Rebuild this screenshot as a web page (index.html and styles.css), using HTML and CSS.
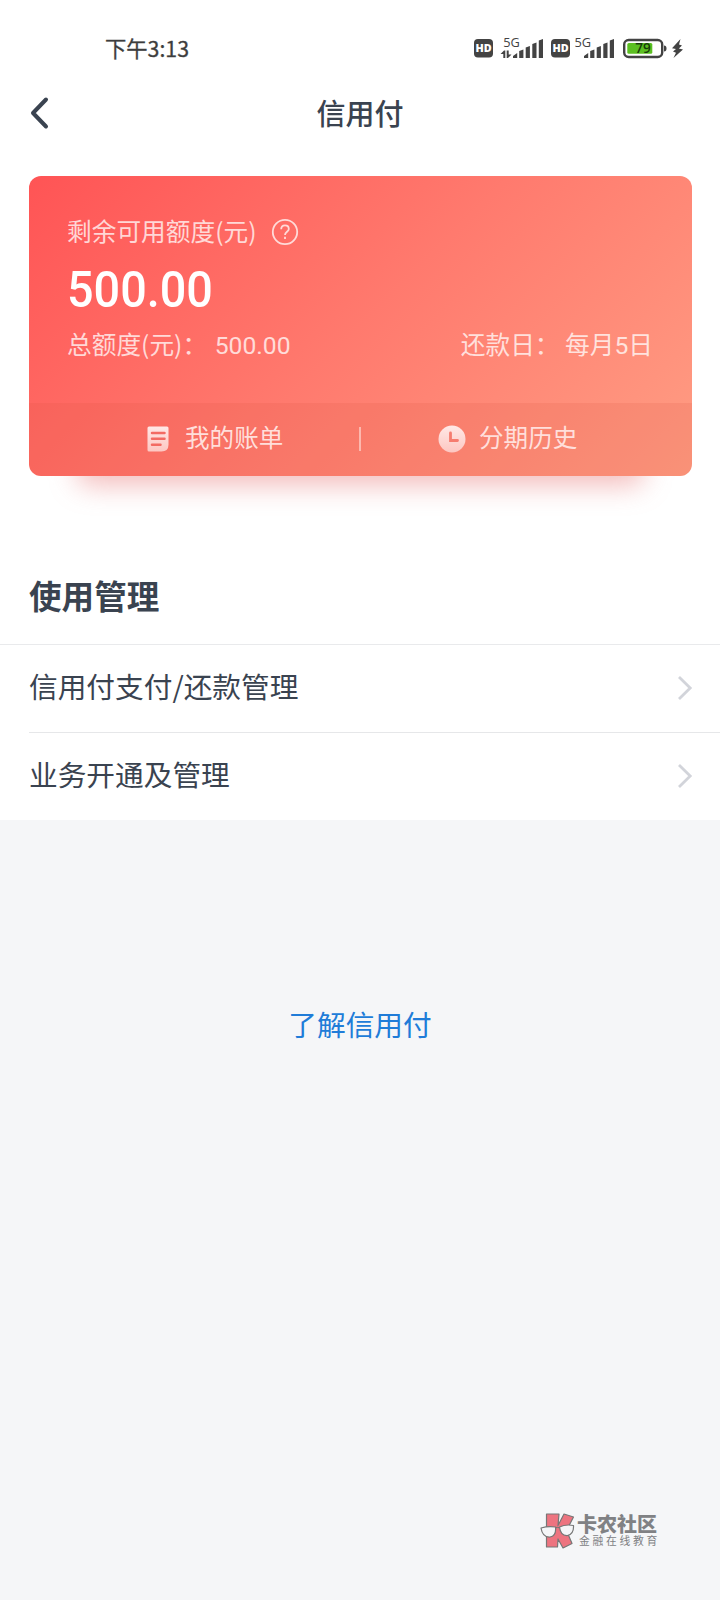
FILE: index.html
```
<!DOCTYPE html>
<html lang="zh-CN">
<head>
<meta charset="utf-8">
<title>信用付</title>
<link rel="stylesheet" href="styles.css">
</head>
<body>
<div class="page">
  <div class="panel">
    <div class="status">
      <div class="clock">下午<span class="clock-num">3:13</span></div>
      <svg class="indicators" width="212" height="36" viewBox="472 28 212 36" fill="#434343">
        <rect x="474" y="39" width="19" height="18.500" rx="4"/>
        <text class="hd" x="483.500" y="52.100">HD</text>
        <text class="net" x="503.300" y="46.500">5G</text>
        <path d="M500.500 54l3.500-3.500h1.300V58h-2v-4zM511.500 54.500L508 58h-1.300v-7.500h2v4z"/>
        <path d="M513 58v-2l4.200-3v5zM519.200 58v-7l4.200-1.600V58zM525.700 58V47.500l4.200-1.600V58zM532.300 58V44l4.200-1.600V58zM538.800 58V40.500l4.200-1.600V58z"/>
        <rect x="551" y="39" width="19" height="18.500" rx="4"/>
        <text class="hd" x="560.500" y="52.100">HD</text>
        <text class="net" x="574.500" y="46.500">5G</text>
        <path d="M584 58v-2l4.200-3v5zM590.200 58v-7l4.200-1.600V58zM596.700 58V47.500l4.200-1.600V58zM603.300 58V44l4.200-1.600V58zM609.800 58V40.500l4.200-1.600V58z"/>
        <rect x="624.200" y="40" width="38" height="17" rx="4.500" fill="#fff" stroke="#434343" stroke-width="2.400"/>
        <rect x="627.300" y="43" width="25" height="10.800" rx="1.500" fill="#5bbf21"/>
        <text class="charge" x="643" y="53.200">79</text>
        <path d="M664 45.500q2.500 0 2.500 3t-2.500 3z"/>
        <path d="M680.500 39l-8.500 9.200 4 .8-3 2.500 3 1.200-2.500 5.300 9.500-8.500-4.200-1 3.200-3-3-1z"/>
      </svg>
    </div>
    <header class="nav">
      <svg class="back" width="20" height="34" viewBox="0 0 20 34" fill="none" stroke="#3a4350" stroke-width="4" stroke-linecap="round" stroke-linejoin="round"><path d="M16 3.500L3 17l13 13.500"/></svg>
      <h1 class="title">信用付</h1>
    </header>
    <section class="card">
      <div class="card-face">
        <div class="card-main">
          <div class="label"><span>剩余可用额度(元)</span>
            <svg class="help" width="28" height="28" viewBox="0 0 28 28" fill="none" stroke="currentColor" stroke-width="1.800"><circle cx="14" cy="14" r="12.200"/><path d="M10.200 11.200c0-2.300 1.500-3.800 3.800-3.800s3.800 1.500 3.800 3.500c0 2.800-3.800 3-3.800 6.200"/><path d="M14 18.800v2.200"/></svg>
          </div>
          <div class="amount">500.00</div>
          <div class="details">
            <div>总额度(元)： <span class="num total">500.00</span></div>
            <div>还款日： 每月<span class="num">5</span>日</div>
          </div>
        </div>
        <div class="card-actions">
          <div class="action">
            <svg width="22" height="26" viewBox="0 0 22 26"><defs><linearGradient id="fade" x2="0" y2="1"><stop stop-color="#ffe8e6"/><stop offset="1" stop-color="#fdc7c2"/></linearGradient></defs><path d="M2 .5h18q1.500 0 1.500 1.500v16.500q0 7-7 7H2q-1.500 0-1.500-1.500V2Q.5.500 2 .5z" fill="url(#fade)"/><path d="M5 7h12.500M5 12.700h12.500M5 18.700h8.500" stroke="#f36b63" stroke-width="2.500" stroke-linecap="round"/></svg>
            <span>我的账单</span>
          </div>
          <div class="divider"></div>
          <div class="action action-history">
            <svg width="28" height="28" viewBox="0 0 28 28"><circle cx="14" cy="14" r="13.500" fill="url(#fade)"/><path d="M12.500 8v7.500h7" fill="none" stroke="#f67c6f" stroke-width="2.800" stroke-linecap="round"/></svg>
            <span>分期历史</span>
          </div>
        </div>
      </div>
    </section>
    <h2 class="heading">使用管理</h2>
    <div class="list">
      <div class="row"><span>信用付支付/还款管理</span><svg width="16" height="26" viewBox="0 0 16 26" fill="none" stroke="#d2d4da" stroke-width="2.800"><path d="M2 2L13.200 13 2 24"/></svg></div>
      <div class="row"><span>业务开通及管理</span><svg width="16" height="26" viewBox="0 0 16 26" fill="none" stroke="#d2d4da" stroke-width="2.800"><path d="M2 2L13.200 13 2 24"/></svg></div>
    </div>
  </div>
  <a class="learn">了解信用付</a>
  <footer class="brand">
    <svg width="35" height="36" viewBox="0 0 35 36" stroke="#777" stroke-width="1.200" stroke-linejoin="round"><path d="M6.500 1H19l-1 11.500L24 1l9.500 3-7 13.500L32 30.500 23 35l-5-9-.5 8H6.500z" fill="#ed7480"/><path d="M1 15q7-2 14.500-1 1 9-5.500 10Q2.500 24.500 1 15zM19.500 14q6-3 14-1.500.5 8.500-6 10-7 .5-8-8.500z" fill="#f5f6f8"/><path d="M15.500 15q2-1.500 4 0" fill="none"/></svg>
    <div class="brand-text"><div class="brand-name">卡农社区</div><div class="brand-sub">金融在线教育</div></div>
  </footer>
</div>
</body>
</html>
```
FILE: styles.css
```
* { box-sizing: border-box; }
body {
  margin: 0;
  background: #f5f6f8;
  color: #3a4350;
  font-family: "Noto Sans CJK SC", sans-serif;
}
.page { width: 720px; height: 1600px; display: flex; flex-direction: column; overflow: hidden; }
.panel { height: 820px; flex: none; background: #fff; }
.status { display: flex; justify-content: space-between; align-items: flex-start; height: 76px; padding: 28px 36px 0 105px; }
.clock { margin-top: 7px; font-size: 21.300px; line-height: 26px; color: #3d3d3d; white-space: nowrap; -webkit-text-stroke: .3px #3d3d3d; }
.clock-num { font-size: 21.300px; }
.indicators { display: block; }
.hd { font: 800 10.800px "Open Sans", sans-serif; fill: #fff; text-anchor: middle; }
.net { font: 500 12.800px "Open Sans", sans-serif; fill: #434343; }
.charge { font: 600 13.500px "Open Sans", sans-serif; fill: #173d0a; text-anchor: middle; }
.nav { display: grid; grid-template-columns: 80px 1fr 80px; align-items: center; height: 74px; }
.back { margin-left: 30px; }
.title { margin: 0 0 2px; text-align: center; font-size: 29px; line-height: 40px; font-weight: 500; }
.card { margin: 26px 28px 0 29px; position: relative; z-index: 0; }
.card::before {
  content: "";
  position: absolute;
  z-index: -1;
  left: 48px; right: 48px; bottom: -9px;
  height: 60px;
  border-radius: 12px;
  background: rgba(226, 92, 92, .42);
  filter: blur(14px);
}
.card-face { height: 299.500px; border-radius: 12px; overflow: hidden; background: linear-gradient(135deg, #ff5455, #ff7a6e 50%, #ff9d83); }
.card-main { height: 227px; padding: 37px 39px 0 38px; color: rgba(255, 255, 255, .75); font-size: 24.700px; }
.label { display: flex; align-items: center; gap: 14px; height: 36px; line-height: 36px; }
.label span { margin-top: -3px; }
.help { margin-top: 1px; }
.amount { width: max-content; height: 60px; margin: 11px 0 0; font: 500 49.500px/60px Roboto, sans-serif; color: #fff; transform: scaleX(.945); transform-origin: left; }
.details { display: flex; justify-content: space-between; height: 36px; line-height: 36px; margin-top: 5px; white-space: nowrap; }
.num { font-family: Roboto, sans-serif; }
.total { margin-left: 2px; }
.card-actions { height: 73px; display: grid; grid-template-columns: 330px 2px 1fr; align-items: center; padding-bottom: 2px; background: rgba(210, 80, 60, .14); color: #ffdfdb; font-size: 24.600px; }
.action { display: flex; align-items: center; gap: 16px; padding-left: 118px; line-height: 36px; }
.action span { margin-top: -5px; }
.action-history { gap: 13px; padding-left: 77px; }
.divider { height: 24px; background: rgba(255, 225, 220, .6); }
.heading { margin: 95.500px 0 0 29px; font-size: 32.600px; line-height: 48px; font-weight: 700; }
.list { margin-top: 24.500px; border-top: 1px solid #e9eaec; }
.row { display: flex; justify-content: space-between; align-items: center; height: 87.500px; margin-left: 29px; padding-right: 27px; font-size: 28.700px; }
.row span { margin-top: -5px; }
.row + .row { border-top: 1px solid #e6e7e9; }
.learn { margin-top: 182px; text-align: center; font-size: 28.700px; line-height: 44px; color: #207cd8; }
.brand { display: flex; gap: 2px; margin: auto 0 51px 540px; }
.brand-text { color: #808184; white-space: nowrap; }
.brand-name { font-size: 20px; line-height: 21px; font-weight: 900; }
.brand-sub { font-size: 10.800px; line-height: 13px; margin-left: 2px; letter-spacing: 2.700px; }
```
